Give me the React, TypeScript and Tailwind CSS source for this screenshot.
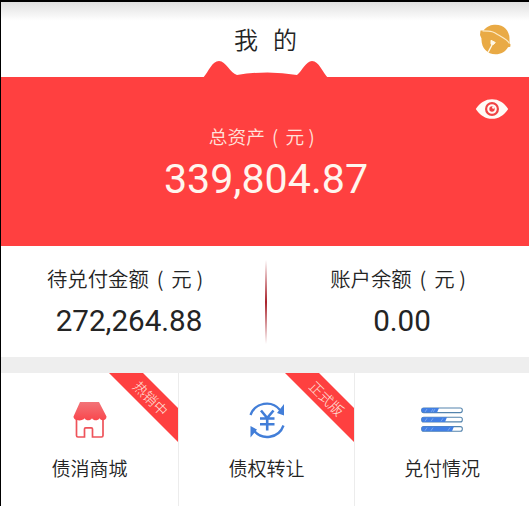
import type { ReactNode } from "react";
import clsx from "clsx";

type Service = {
  label: string;
  icon: ReactNode;
  tag?: string;
};

function BellIcon() {
  return (
    <svg width="32" height="32" viewBox="0 0 32 32" fill="none">
      <path d="M4.500 6.500C8 2 12.500 .8 16.500 .8C25 .8 30.500 7 30.500 14.500C30.500 17 30.300 18.500 31.500 20.500L31.300 22.800L29 23.200C26.500 27.500 22 30.300 16.500 30.300C8 30.300 2 23.500 2.500 14.500L1 11L1.500 6.500Z" fill="#e9aa45" />
      <path d="M3.500 6.800C13 6.800 15 8 18.500 10.500C23.500 13.500 27.500 14.500 30.500 19.500" stroke="#fdebc6" strokeWidth="1.200" />
      <path d="M9 28.500L13.500 20" stroke="#fff8e8" strokeWidth="1.400" />
      <path d="M12 16.300L16.300 18.500L14.500 20.500L12 20.200Z" fill="#fff8e8" stroke="#fff8e8" strokeLinejoin="round" />
    </svg>
  );
}

function EyeIcon() {
  return (
    <svg width="34" height="22" viewBox="0 0 34 22" fill="none">
      <path d="M.8 11C5 4.500 10.500 1.200 17 1.200S29 4.500 33.200 11C29 17.500 23.500 20.800 17 20.800S5 17.500 .8 11Z" fill="#fffaf5" />
      <circle cx="17" cy="11" r="5.900" stroke="#f04444" strokeWidth="2.200" />
      <circle cx="17" cy="11" r="2.700" fill="#f04444" />
      <circle cx="18.300" cy="9.500" r="1.200" fill="#fffaf5" />
    </svg>
  );
}

function ShopIcon() {
  return (
    <svg width="36" height="38" viewBox="0 0 36 38" fill="none">
      <defs>
        <linearGradient id="roof" x1="0" y1="0" x2="0" y2="1">
          <stop offset="0" stopColor="#f27478" />
          <stop offset="1" stopColor="#f9474d" />
        </linearGradient>
      </defs>
      <path d="M4.500 18V34.500Q4.500 36 6 36H12.500V28Q12.500 26.800 13.700 26.800H19.300Q20.500 26.800 20.500 28V36H29.500Q31 36 31 34.500V18" stroke="#ee535a" strokeWidth="1.700" />
      <path d="M8 1H27L34.500 15.500C34.500 20 29 20.200 27.500 17.300C26 20 21.500 20 20 17.300C18.500 20 14 20 12.500 17.300C11 20.200 1.500 20.500 1.500 15.500Z" fill="url(#roof)" />
    </svg>
  );
}

function TransferIcon() {
  return (
    <svg width="38" height="38" viewBox="0 0 38 38" fill="none" stroke="#427ed8">
      <path d="M2.500 14A17.200 17.200 0 0 1 32 9M35.500 24.500A17.200 17.200 0 0 1 5.500 29" strokeWidth="2.300" />
      <path d="M36 3V14.500L29 12ZM2.500 36.500V25L9 28.500Z" fill="#427ed8" stroke="none" />
      <path d="M13 9.500L19.200 17L25.500 9.500M19.200 17V29.500M12 17.500H26.500M12 23.200H26.500" strokeWidth="2.600" />
    </svg>
  );
}

function ProgressIcon() {
  const bars = [
    { y: 1, end: 18 },
    { y: 10.3, end: 26 },
    { y: 19.6, end: 33 },
  ];
  return (
    <svg width="42" height="26" viewBox="0 0 42 26" fill="none">
      {bars.map(({ y, end }) => (
        <g key={y}>
          <rect x=".7" y={y} width="40.600" height="4.600" rx="2" fill="#fff" stroke="#5484ad" strokeWidth="1.100" />
          <path d={`M2 ${y}H${end}L${end - 2} ${y + 4.6}H2Q.5 ${y + 4.6} .5 ${y + 2.3}T2 ${y}Z`} fill="#427fe4" />
          <path d={`M4 ${y + 4}l2-3M10 ${y + 4}l2-3M${end - 6} ${y + 4}l2-3`} stroke="#87b1ef" strokeWidth=".8" />
        </g>
      ))}
    </svg>
  );
}

const SERVICES: Service[] = [
  { label: "债消商城", icon: <ShopIcon />, tag: "热销中" },
  { label: "债权转让", icon: <TransferIcon />, tag: "正式版" },
  { label: "兑付情况", icon: <ProgressIcon /> },
];

function Unit() {
  return (
    <>
      <span className="inline-block w-[1.1em] text-center">(</span>元
      <span className="inline-block w-[.8em] text-center">)</span>
    </>
  );
}

function Ribbon({ text }: { text: string }) {
  return (
    <div className="absolute right-0 top-0 h-[69px] w-[69px]">
      <svg className="absolute inset-0" width="69" height="69" viewBox="0 0 69 69">
        <path d="M0 0H34L69 35V69Z" fill="#fe4040" />
      </svg>
      <span className="absolute left-[42px] top-[25px] -translate-x-1/2 -translate-y-1/2 rotate-45 whitespace-nowrap text-[14px] leading-none font-light text-[#ffe5df]">
        {text}
      </span>
    </div>
  );
}

function Balance({ label, amount, className }: { label: string; amount: string; className?: string }) {
  return (
    <div className={clsx("flex flex-col items-center pt-[17px]", className)}>
      <p className="mr-[3px] h-[30px] whitespace-nowrap text-[20.4px] leading-[30px]">
        {label}
        <Unit />
      </p>
      <p className="mt-[10px] font-[Roboto] text-[29.6px] leading-[36px] font-normal">{amount}</p>
    </div>
  );
}

export default function App() {
  return (
    <div className="h-[506px] w-[529px] overflow-hidden border-l border-t-2 border-black bg-white font-['Noto_Sans_CJK_SC',sans-serif] font-[350] text-[#242424]">
      <header className="grid h-[75px] grid-cols-[1fr_auto_1fr] items-center bg-linear-to-b from-[#e0e0e0] via-white via-25% to-white">
        <span />
        <h1 className="flex gap-[15px] pb-0.5 pl-px text-[24px] leading-[36px] font-[350]">
          <span>我</span>
          <span>的</span>
        </h1>
        <button className="mr-[18px] justify-self-end">
          <BellIcon />
        </button>
      </header>

      <section className="relative flex h-[169px] flex-col items-center bg-[#ff4040] text-[#fff6ee]">
        <svg className="absolute left-[202px] top-[-17px]" width="126" height="19" viewBox="0 0 126 19">
          <path d="M0 18C6 11 9 1 16 1C23 1 27 13 34 15Q65 10 94 15C99 11 103 1 109 1C116 1 120 13 125 18V19H0Z" fill="#ff4040" />
        </svg>
        <button className="mr-[20px] mt-[21px] self-end">
          <EyeIcon />
        </button>
        <p className="mr-[2px] mt-[3px] whitespace-nowrap text-[18.7px] leading-[26px] text-[#ffe3dc]">
          总资产
          <Unit />
        </p>
        <p className="mt-[6px] pl-[2px] font-[Roboto] text-[41.2px] leading-[48px] font-normal">339,804.87</p>
      </section>

      <section className="flex h-[111px]">
        <Balance label="待兑付金额" amount="272,264.88" className="w-[264px] pr-[8px]" />
        <div className="mt-[14px] h-[84px] w-[2px] bg-linear-to-b from-transparent via-[#a9222b] to-transparent" />
        <Balance label="账户余额" amount="0.00" className="w-[262px] pl-[8px]" />
      </section>

      <div className="h-4 bg-[#eeeeee]" />

      <nav className="grid h-[133px] grid-cols-[177px_176px_175px]">
        {SERVICES.map(({ label, icon, tag }, i) => (
          <a
            key={label}
            className={clsx("relative flex flex-col items-center", i > 0 && "border-l border-[#ececec]")}
          >
            <div className="mt-[27px] flex h-[40px] items-center">{icon}</div>
            <span className="mt-[14px] text-[19px] leading-[28px]">{label}</span>
            {tag && <Ribbon text={tag} />}
          </a>
        ))}
      </nav>
    </div>
  );
}
